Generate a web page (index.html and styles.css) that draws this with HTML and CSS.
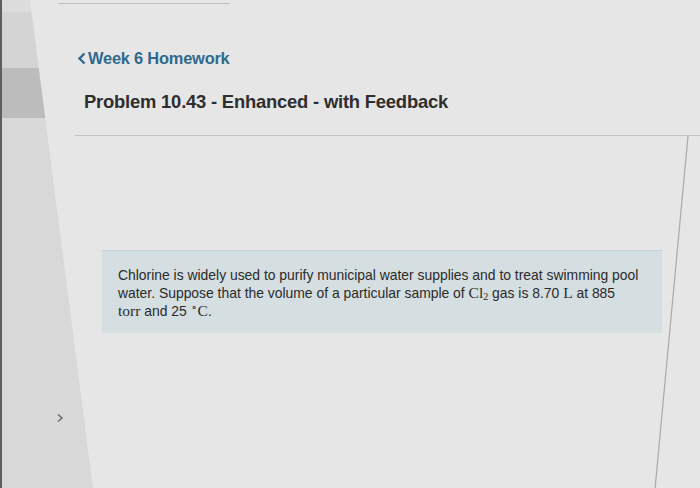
FILE: index.html
```html
<!DOCTYPE html>
<html lang="en">
<head>
<meta charset="utf-8">
<title>Problem 10.43 - Enhanced - with Feedback</title>
<link rel="stylesheet" href="styles.css">
</head>
<body>
<div class="screen">
  <aside class="sidebar">
    <div class="sb-block sb-top"></div>
    <div class="sb-block sb-mid"></div>
    <div class="sb-block sb-dark"></div>
    <div class="sb-rest"><svg class="sb-chevron" width="8" height="10" viewBox="0 0 8 10"><path d="M2 1.5 L6 5 L2 8.5" fill="none" stroke="#6a6a6a" stroke-width="1.5"/></svg></div>
  </aside>
  <main class="panel">
    <div class="topline"></div>
    <a class="back" href="#"><svg class="back-chev" width="10" height="13" viewBox="0 0 10 13"><path d="M7.5 1.5 L2.5 6.5 L7.5 11.5" fill="none" stroke="#2f6a8e" stroke-width="2.4"/></svg>Week 6 Homework</a>
    <h1 class="title">Problem 10.43 - Enhanced - with Feedback</h1>
    <section class="content">
      <div class="question">
        Chlorine is widely used to purify municipal water supplies and to treat swimming pool water. Suppose that the volume of a particular sample of <span class="m">Cl<sub>2</sub></span> gas is 8.70 <span class="m">L</span> at 885<br><span class="m">torr</span> and 25 <span class="m"><sup>&#8728;</sup>C</span>.
      </div>
    </section>
  </main>
</div>
</body>
</html>
```

FILE: styles.css
```css
* { box-sizing: border-box; }
html, body { margin: 0; padding: 0; }
body {
  width: 700px;
  height: 488px;
  overflow: hidden;
  font-family: "Liberation Sans", Arial, sans-serif;
  background: #d8d8d8;
}
.screen {
  display: grid;
  width: 700px;
  height: 488px;
}
.sidebar, .panel { grid-area: 1 / 1; }

.sidebar {
  display: flex;
  flex-direction: column;
  width: 100px;
  height: 488px;
  border-left: 2px solid #5e5e5e;
}
.sb-block { flex: none; }
.sb-top { height: 12px; background: #dcdcdc; }
.sb-mid { height: 56px; background: #d4d4d4; }
.sb-dark { height: 50px; background: #bcbcbc; }
.sb-rest {
  flex: 1;
  background: #d8d8d8;
  padding: 295px 0 0 54px;
}
.sb-chevron { display: block; }

.panel {
  height: 488px;
  background: #e6e6e6;
  clip-path: polygon(30px 0, 100% 0, 100% 100%, 93px 100%);
  display: flex;
  flex-direction: column;
}
.topline {
  height: 1px;
  width: 172px;
  margin: 3px 0 0 58px;
  background: #bdbdbd;
}
.back {
  margin: 44px 0 0 77px;
  font-size: 16.4px;
  line-height: 20px;
  font-weight: bold;
  color: #2f6a8e;
  text-decoration: none;
  letter-spacing: -0.2px;
  align-self: flex-start;
  display: flex;
  align-items: center;
  gap: 1px;
}
.back-chev { display: block; flex: none; }
.title {
  margin: 23px 0 0 84px;
  font-size: 18.4px;
  line-height: 22px;
  font-weight: bold;
  color: #2e2e2e;
  letter-spacing: -0.2px;
}
.content {
  flex: 1;
  margin: 22px 0 0 75px;
  border-top: 1px solid #c4c4c4;
  padding: 114px 0 0 27px;
  background-image: url("data:image/svg+xml,%3Csvg xmlns='http://www.w3.org/2000/svg' width='625' height='353' viewBox='0 0 625 353' preserveAspectRatio='none'%3E%3Cline x1='613' y1='0' x2='580' y2='353' stroke='%23a9a9a9' stroke-width='1.2'/%3E%3C/svg%3E");
  background-repeat: no-repeat;
  background-size: 625px 353px;
}
.question {
  width: 560px;
  height: 83px;
  background: #d5dee1;
  border-top: 1px solid #c9d2d5;
  padding: 16px 10px 0 16px;
  font-size: 13.9px;
  line-height: 17px;
  color: #2b2b2b;
}
.m {
  font-family: "Liberation Serif", "Times New Roman", serif;
  font-size: 15.5px;
}
.m sub {
  font-size: 10px;
  vertical-align: -2px;
  line-height: 0;
}
.m sup {
  font-size: 10px;
  vertical-align: 6px;
  line-height: 0;
  margin-right: 1px;
}
```
